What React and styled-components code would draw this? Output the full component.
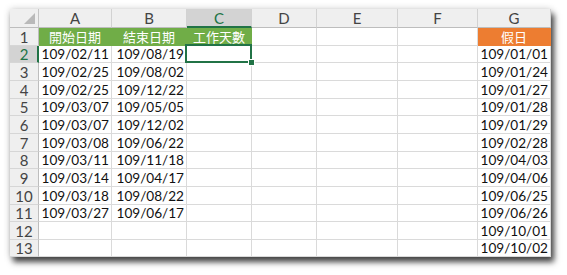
import React from 'react';
import styled, { createGlobalStyle, css } from 'styled-components';

const Global = createGlobalStyle`
  html, body { margin: 0; padding: 0; background: #ffffff; }
  body { font-family: Lato, "Noto Sans CJK TC", sans-serif; }
`;

const Page = styled.div`
  width: 567px;
  height: 275px;
  padding: 9px 0 0 10px;
  box-sizing: border-box;
  overflow: hidden;
`;

const Sheet = styled.div`
  display: grid;
  grid-template-columns: 29px 73px 75px 65px 65px 81px 80px 73px;
  grid-template-rows: 19px 18px 17px 18px 18px 17px 18px 18px 17px 18px 18px 17px 18px 17px;
  width: 541px;
  background: #ffffff;
  box-shadow: 3px 5px 6px rgba(0, 0, 0, 0.72), 0 0 7px rgba(0, 0, 0, 0.18);
`;

const Corner = styled.div`
  position: relative;
  box-sizing: border-box;
  background: #efefef;
  border-right: 1px solid #c4c4c4;
  border-bottom: 1px solid #bdbdbd;
  &::after {
    content: '';
    position: absolute;
    right: 3px;
    bottom: 3px;
    width: 0;
    height: 0;
    border-left: 11px solid transparent;
    border-bottom: 11px solid #b9b9b9;
  }
`;

const ColHeader = styled.div`
  box-sizing: border-box;
  display: flex;
  align-items: center;
  justify-content: center;
  font-family: Lato, sans-serif;
  font-size: 15px;
  color: #444444;
  background: #efefef;
  border-right: 1px solid #d2d2d2;
  border-bottom: 1px solid #bdbdbd;
  ${(p) =>
    p.$active &&
    css`
      background: #d3d3d3;
      color: #217346;
      border-bottom: 2px solid #217346;
      padding-top: 1px;
    `}
`;

const RowHeader = styled.div`
  box-sizing: border-box;
  display: flex;
  align-items: center;
  justify-content: center;
  font-family: Lato, sans-serif;
  font-size: 15px;
  color: #444444;
  background: #efefef;
  border-right: 1px solid #bdbdbd;
  border-bottom: 1px solid #d6d6d6;
  ${(p) =>
    p.$active &&
    css`
      background: #d3d3d3;
      color: #217346;
      border-right: 2px solid #217346;
      padding-left: 1px;
    `}
`;

const Cell = styled.div`
  position: relative;
  box-sizing: border-box;
  display: flex;
  align-items: center;
  justify-content: flex-end;
  padding-right: 2px;
  font-family: Lato, sans-serif;
  font-size: 13.6px;
  color: #111111;
  white-space: nowrap;
  border-right: 1px solid #dadada;
  border-bottom: 1px solid #dadada;
  ${(p) =>
    p.$fill &&
    css`
      background: ${p.$fill};
      border-color: ${p.$fill};
      color: #ffffff;
      justify-content: center;
      padding-right: 0;
      font-family: "Noto Sans CJK TC", sans-serif;
      font-size: 13px;
    `}
  ${(p) =>
    p.$selected &&
    css`
      &::before {
        content: '';
        position: absolute;
        left: -2px;
        top: -2px;
        right: -1px;
        bottom: -1px;
        border: 2px solid #217346;
        pointer-events: none;
      }
      &::after {
        content: '';
        position: absolute;
        right: -4px;
        bottom: -4px;
        width: 5px;
        height: 5px;
        background: #217346;
        border: 1px solid #ffffff;
        z-index: 2;
      }
    `}
`;

const cols = ['A', 'B', 'C', 'D', 'E', 'F', 'G'];

const startDates = [
  '109/02/11', '109/02/25', '109/02/25', '109/03/07', '109/03/07',
  '109/03/08', '109/03/11', '109/03/14', '109/03/18', '109/03/27',
];
const endDates = [
  '109/08/19', '109/08/02', '109/12/22', '109/05/05', '109/12/02',
  '109/06/22', '109/11/18', '109/04/17', '109/08/22', '109/06/17',
];
const holidays = [
  '109/01/01', '109/01/24', '109/01/27', '109/01/28', '109/01/29', '109/02/28',
  '109/04/03', '109/04/06', '109/06/25', '109/06/26', '109/10/01', '109/10/02',
];

const GREEN = '#70ad47';
const ORANGE = '#ed7d31';

export default function App() {
  const rows = [];
  rows.push(
    <React.Fragment key="r1">
      <RowHeader>1</RowHeader>
      <Cell $fill={GREEN}>開始日期</Cell>
      <Cell $fill={GREEN}>結束日期</Cell>
      <Cell $fill={GREEN}>工作天數</Cell>
      <Cell />
      <Cell />
      <Cell />
      <Cell $fill={ORANGE}>假日</Cell>
    </React.Fragment>
  );
  for (let r = 2; r <= 13; r++) {
    const i = r - 2;
    rows.push(
      <React.Fragment key={'r' + r}>
        <RowHeader $active={r === 2}>{r}</RowHeader>
        <Cell>{startDates[i] || ''}</Cell>
        <Cell>{endDates[i] || ''}</Cell>
        <Cell $selected={r === 2} />
        <Cell />
        <Cell />
        <Cell />
        <Cell>{holidays[i] || ''}</Cell>
      </React.Fragment>
    );
  }
  return (
    <Page>
      <Global />
      <Sheet>
        <Corner />
        {cols.map((c) => (
          <ColHeader key={c} $active={c === 'C'}>
            {c}
          </ColHeader>
        ))}
        {rows}
      </Sheet>
    </Page>
  );
}
